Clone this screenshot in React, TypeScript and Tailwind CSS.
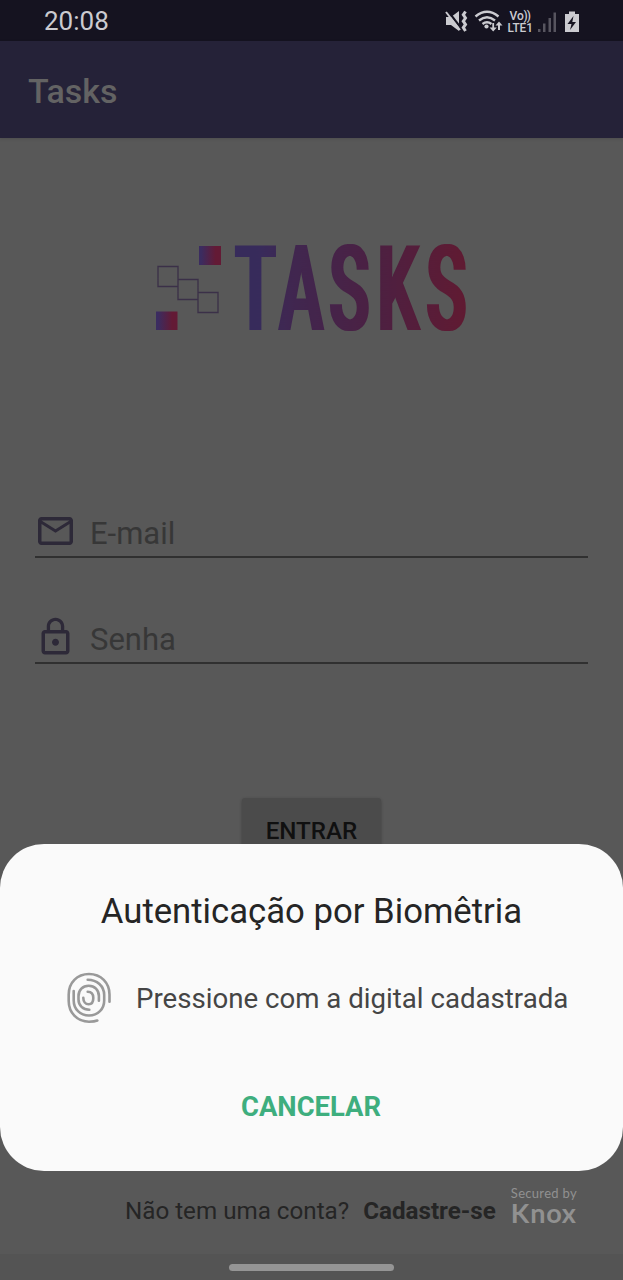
import React from "react";

function StatusIcons() {
  return (
    <svg width="140" height="24" viewBox="443 8 140 24" fill="#cbcbd0">
      <path d="M446 16h5l8-6v20l-8-6h-5z" />
      <path d="M447.500 9.500l13 17" stroke="#151320" strokeWidth="2.200" />
      <path d="M446 11l14 18" stroke="#cbcbd0" strokeWidth="2" />
      <path d="M465.500 10.500l-2.200 3.300 2.200 3.200-2.200 3.200 2.200 3.200-2.200 3.200 2.200 3.400" fill="none" stroke="#cbcbd0" strokeWidth="3" />
      <path d="M475.500 15.500q11.500-9.500 23 0M479 19.500q8-6.500 16 0M482.500 23q4.500-3.500 9 0" fill="none" stroke="#cbcbd0" strokeWidth="2.400" />
      <circle cx="486.500" cy="25.500" r="2.100" />
      <path d="M492.300 22v4.500h-2.700l3.600 4 3.600-4h-2.700V22zM498 29v-4.500h-2.500l3.500-4 3.500 4H500V29z" />
      <text x="509.500" y="18.800" fontFamily="Roboto, sans-serif" fontWeight="500" fontSize="12">Vo<tspan dx="-0.300">)</tspan><tspan dx="-1">)</tspan></text>
      <text x="507.500" y="30.500" fontFamily="Roboto, sans-serif" fontWeight="500" fontSize="12.600" textLength="25.500" lengthAdjust="spacingAndGlyphs">LTE1</text>
      <path d="M538 28h2.500v3H538zM543 22.500h2.500V31H543zM548.500 17h2.500v14h-2.500zM553.500 11.500h2.500V31h-2.500z" fill="#57555f" />
      <path d="M565 13h4v-2.500h6V13h4v18h-14z" />
      <path d="M573.500 15l-6 8h4l-1.500 6 6-8h-3.700z" fill="#151320" />
    </svg>
  );
}

function Logo() {
  return (
    <svg className="overflow-visible" width="320" height="100" viewBox="152 238 320 100">
      <defs>
        <linearGradient id="square">
          <stop offset="0.100" stopColor="#3b2c60" />
          <stop offset="0.750" stopColor="#631a35" />
        </linearGradient>
        <linearGradient id="word" gradientUnits="userSpaceOnUse" x1="0" x2="422" y1="0" y2="0">
          <stop offset="0.100" stopColor="#372b5b" />
          <stop offset="0.250" stopColor="#40264f" />
          <stop offset="0.600" stopColor="#4b2042" />
          <stop offset="1" stopColor="#601a31" />
        </linearGradient>
        <filter id="widen" colorInterpolationFilters="sRGB" x="-5%" y="-5%" width="110%" height="110%">
          <feMorphology operator="dilate" radius="2 0" />
        </filter>
      </defs>
      <path d="M199 246h22v19h-22z" fill="url(#square)" />
      <path d="M156 311.500h21.500v18.500H156z" fill="url(#square)" />
      <path d="M158 266.500h20v20h-20zM178 279.500h20v20h-20zM198 292.500h20v20h-20z" fill="none" stroke="#3b3048" strokeWidth="1.300" />
      <g filter="url(#widen)">
        <text transform="translate(235 330) scale(0.550 1)" fill="url(#word)" x="1 81 172 259 348" y="0" fontFamily="Roboto, sans-serif" fontWeight="500" fontSize="119">TASKS</text>
      </g>
    </svg>
  );
}

function MailIcon() {
  return (
    <svg width="41" height="42" viewBox="0.300 0 23.400 24" fill="#2d2938">
      <path d="M22 6c0-1.100-.9-2-2-2H4c-1.100 0-2 .9-2 2v12c0 1.100.9 2 2 2h16c1.100 0 2-.9 2-2V6zm-2 0l-8 5-8-5h16zm0 12H4V8l8 5 8-5v10z" />
    </svg>
  );
}

function LockIcon() {
  return (
    <svg width="41" height="42" viewBox="0.300 0 23.400 24" fill="#2d2938">
      <path d="M12 17c1.100 0 2-.9 2-2s-.9-2-2-2-2 .9-2 2 .9 2 2 2zm6-9h-1V6c0-2.760-2.240-5-5-5S7 3.240 7 6v2H6c-1.100 0-2 .9-2 2v10c0 1.100.9 2 2 2h12c1.100 0 2-.9 2-2V10c0-1.100-.9-2-2-2zM8.900 6c0-1.710 1.390-3.100 3.100-3.100s3.100 1.390 3.100 3.100v2H8.900V6zM18 20H6V10h12v10z" />
    </svg>
  );
}

function Fingerprint() {
  return (
    <svg width="46" height="54" viewBox="66 971 46 54" fill="none" stroke="#999" strokeWidth="2.600" strokeLinecap="round">
      <path d="M97.300 1020.500C95 1021.500 92 1021.700 89 1021.700C77 1021.700 68.700 1012.500 68.700 1001V994.500C68.700 983 77 974 89 974C101 974 109.500 983 109.500 994.500V1001.700" />
      <path d="M73.700 991V1000.500C73.700 1009 80 1015.500 89 1015.500C98 1015.500 104.200 1009 104.200 1000.500V995C104.200 986 97 979.700 87.700 979.700" />
      <path d="M98.900 1000.700V996C98.900 990 94.500 985.700 88.700 985.700C82.700 985.700 78.500 990 78.500 996V999.500C78.500 1005.500 83 1009.700 89.300 1009.700" />
      <path d="M87.700 991.700C91 991.700 93.300 994 93.300 998C93.300 1002 91.500 1004.300 88.700 1004.300C85.500 1004.300 83.300 1001.500 83.300 997.700" />
    </svg>
  );
}

function Field({ icon, label }: { icon: React.ReactNode; label: string }) {
  return (
    <div className="mx-[35px] flex h-[48px] items-start border-b-2 border-[#303030]">
      {icon}
      <span className="ml-[14px] mt-[5px] text-[31px] leading-[38px] text-[#373737]">{label}</span>
    </div>
  );
}

export default function App() {
  return (
    <main className="relative flex h-[1280px] w-[623px] flex-col overflow-hidden bg-[#585858] font-['Roboto',sans-serif]">
      <header className="flex h-[41px] shrink-0 items-center justify-between bg-[#151320] pl-[44px] pr-[40px] text-[26px] text-[#cbcbd0]">
        <time className="pt-0.5">20:08</time>
        <StatusIcons />
      </header>
      <div className="flex h-[97px] shrink-0 items-center bg-[#252238] pl-[28px] pt-[3px] text-[34px] font-medium text-[#636363] shadow-[0_1px_3px_rgba(0,0,0,0.12)]">Tasks</div>
      <section className="flex h-[372px] shrink-0 justify-center pt-[100px]">
        <Logo />
      </section>
      <section className="flex h-[288px] shrink-0 flex-col gap-[58px]">
        <Field icon={<MailIcon />} label="E-mail" />
        <Field icon={<LockIcon />} label="Senha" />
      </section>
      <button className="mx-auto h-[66px] w-[139px] shrink-0 rounded-[3px] bg-[#4b4b4b] text-[24.200px] font-medium text-[#101010] shadow-[0_1px_3px_rgba(0,0,0,0.3)]">ENTRAR</button>
      <footer className="mt-auto flex h-[109px] shrink-0 flex-col">
        <div className="flex h-[83px] items-start pl-[125px] pt-[16px] text-[24.200px] leading-[48px] text-[#252525]">
          <span>Não tem uma conta?</span>
          <b className="ml-[14px]">Cadastre-se</b>
          <div className="ml-[15px] font-['Lato',sans-serif] text-[#919191]">
            <div className="text-[13px] leading-[12px] tracking-[0.3px]">Secured by</div>
            <div className="text-[27px] font-bold leading-[28px] tracking-[0.8px]">Knox</div>
          </div>
        </div>
        <div className="flex h-[26px] items-center justify-center bg-[#545454]">
          <div className="h-[7px] w-[165px] rounded-full bg-[#959595]" />
        </div>
      </footer>
      <div role="dialog" className="absolute inset-x-0 top-[844px] flex h-[327px] flex-col items-center rounded-[44px] bg-[#fafafa] pt-[46px] text-[#252525]">
        <h1 className="text-[34.700px] leading-[42px]">Autenticação por Biomêtria</h1>
        <div className="mt-[39px] flex w-full items-center pl-[66px]">
          <Fingerprint />
          <p className="ml-[24px] whitespace-nowrap pt-[1px] text-[27.650px] text-[#454545]">Pressione com a digital cadastrada</p>
        </div>
        <button className="mt-[64px] pr-[1px] text-[27.400px] font-bold leading-[36px] text-[#3eae7e]">CANCELAR</button>
      </div>
    </main>
  );
}
